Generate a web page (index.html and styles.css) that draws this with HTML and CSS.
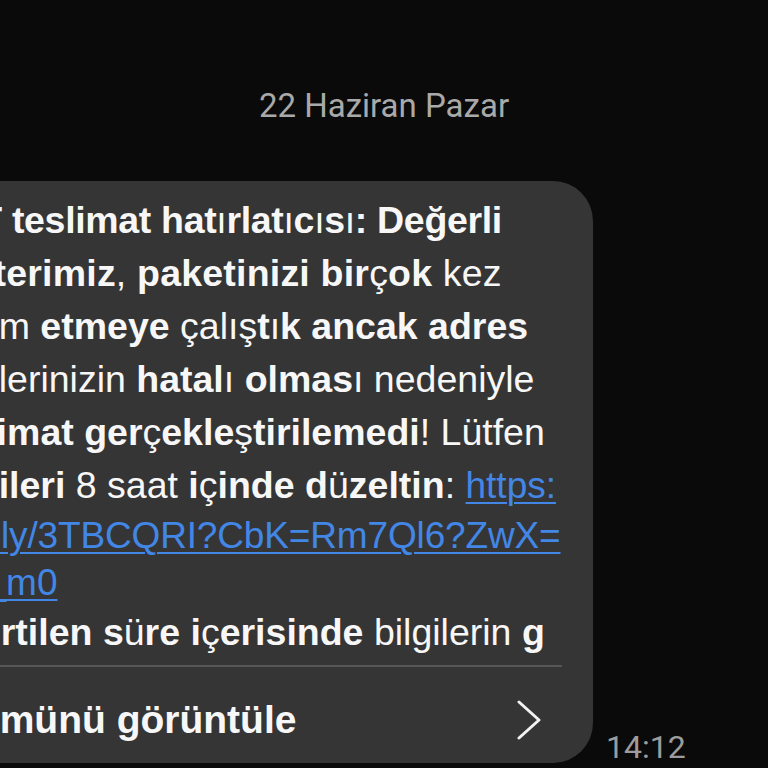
FILE: index.html
```html
<!DOCTYPE html>
<html lang="tr">
<head>
<meta charset="utf-8">
<title>Mesaj</title>
<link rel="stylesheet" href="styles.css">
</head>
<body>
<main class="thread">
  <div class="date">22 Haziran Pazar</div>
  <div class="msg-row">
    <div class="bubble">
      <p class="text"><span class="line narrow"><b>PTT teslimat hat</b>ı<b>rlat</b>ı<b>c</b>ı<b>s</b>ı<b>:</b> <b>Değerli</b></span><span class="line shift wide"><b>m</b>üş<b>terimiz</b>, <b>paketinizi</b> <b>bir</b>ç<b>ok</b> kez</span><span class="line">teslim <b>etmeye</b> çalış<b>t</b>ı<b>k</b> <b>ancak</b> <b>adres</b></span><span class="line">bilgilerinizin <b>hatal</b>ı <b>olmas</b>ı nedeniyle</span><span class="line"><b>teslimat</b> <b>ger</b>ç<b>ekle</b>ş<b>tirilemedi</b>! Lütfen</span><span class="line"><b>bilgileri</b> 8 saat <b>i</b>ç<b>inde</b> <b>d</b>ü<b>zeltin</b>: <a class="link" href="#">https:</a></span><span class="line tight slim"><a class="link" href="#">//bit.ly/3TBCQRI?CbK=Rm7Ql6?ZwX=</a></span><span class="line tight"><a class="link" href="#">Ej3_m0</a></span><span class="line"><b>Belirtilen</b> <b>s</b>ü<b>re</b> <b>i</b>ç<b>erisinde</b> bilgilerin <b>g</b></span></p>
      <div class="footer">
        <span class="view-all">Tümünü görüntüle</span>
        <svg class="chevron" width="26" height="40" viewBox="0 0 26 40" aria-hidden="true"><polyline points="3,2 23,20 3,38" fill="none" stroke="#f2f2f2" stroke-width="3" stroke-linecap="round" stroke-linejoin="round"/></svg>
      </div>
    </div>
    <span class="time">14:12</span>
  </div>
</main>
</body>
</html>
```
FILE: styles.css
```css
html, body {
  margin: 0;
  padding: 0;
  background: #0a0a0a;
  overflow: hidden;
}

.thread {
  width: 768px;
  height: 768px;
  padding-top: 86px;
  box-sizing: border-box;
}

.date {
  font-family: Roboto, "Liberation Sans", sans-serif;
  font-size: 33px;
  line-height: 40px;
  color: #a9a9a9;
  text-align: center;
  margin-bottom: 55px;
}

.msg-row {
  display: flex;
  align-items: flex-end;
  gap: 13px;
}

.bubble {
  flex: none;
  width: 693px;
  margin-left: -100px;
  box-sizing: border-box;
  padding: 13px 31px 0 32px;
  background: #353535;
  border-radius: 40px;
  overflow: hidden;
  font-family: "Liberation Sans", Arial, sans-serif;
  color: #f7f7f7;
}

.text {
  margin: 0;
  font-size: 37.5px;
  line-height: 53px;
}

.line {
  display: block;
  white-space: nowrap;
}

.line.shift {
  text-indent: -12px;
}

.line.narrow {
  letter-spacing: -0.33px;
}

.line.wide {
  letter-spacing: 0.2px;
}

.line.slim {
  letter-spacing: -0.15px;
}

.line.tight {
  line-height: 47px;
}

.text b {
  font-weight: 700;
}

.link {
  font-size: 37px;
  color: #4387e6;
  text-decoration: underline;
  text-decoration-thickness: 2px;
  text-underline-offset: 4px;
}

.footer {
  margin-top: 6px;
  margin-left: 20px;
  border-top: 2px solid #575757;
  display: flex;
  align-items: center;
  justify-content: space-between;
  padding: 32px 20px 22px 0;
}

.view-all {
  font-size: 39px;
  line-height: 42px;
  font-weight: 700;
  white-space: nowrap;
}

.chevron {
  display: block;
  flex: none;
}

.time {
  font-family: Roboto, "Liberation Sans", sans-serif;
  font-size: 32px;
  line-height: 32px;
  color: #9c9c9c;
}
```
